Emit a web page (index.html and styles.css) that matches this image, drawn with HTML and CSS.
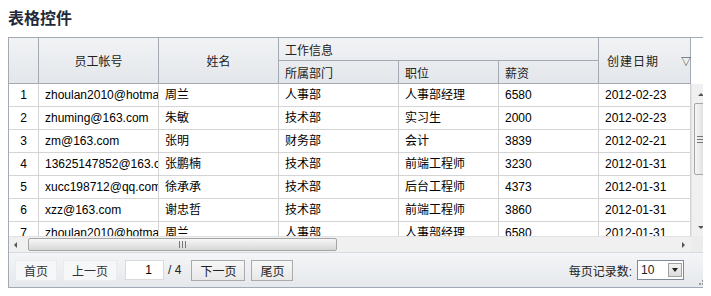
FILE: index.html
```html
<!DOCTYPE html>
<html lang="zh-CN">
<head>
    <meta charset="UTF-8">
    <title>表格控件</title>
    <link rel="stylesheet" href="styles.css">
</head>
<body>

    <h2 class="title">表格控件</h2>

    <div class="grid">
        <div class="grid-top">
            <div class="grid-main">
                <!-- 表头：两行，工作信息下分三列 -->
                <div class="grid-head">
                    <div class="hcell span2"></div>
                    <div class="hcell span2 center">员工帐号</div>
                    <div class="hcell span2 center">姓名</div>
                    <div class="hcell group">工作信息</div>
                    <div class="hcell span2 center sort">创建日期<span class="sort-arrow">▽</span></div>
                    <div class="hcell sub">所属部门</div>
                    <div class="hcell sub">职位</div>
                    <div class="hcell sub">薪资</div>
                </div>
                <div class="grid-view">
                    <div class="grid-body" id="gridBody"></div>
                </div>
            </div>
            <div class="vscroll">
                <div class="vscroll-head"></div>
                <div class="vscroll-track">
                    <span class="arrow up"></span>
                    <div class="vthumb"><span class="grip"></span></div>
                    <span class="arrow down"></span>
                </div>
            </div>
        </div>

        <div class="hscroll">
            <div class="hscroll-track">
                <span class="arrow left"></span>
                <div class="hthumb"><span class="grip"></span></div>
                <span class="arrow right"></span>
            </div>
            <div class="corner"></div>
        </div>

        <div class="pager">
            <button class="btn flat">首页</button>
            <button class="btn flat">上一页</button>
            <input type="text" class="page-input" value="1">
            <span class="page-total">/ 4</span>
            <button class="btn">下一页</button>
            <button class="btn">尾页</button>
            <div class="page-size">
                <span>每页记录数:</span>
                <div class="select">
                    <span class="select-value">10</span>
                    <span class="select-btn"></span>
                </div>
            </div>
            <div class="resize-grip"></div>
        </div>
    </div>

    <script>
        // 表格数据
        const rows = [
            ['zhoulan2010@hotmail.com', '周兰', '人事部', '人事部经理', '6580', '2012-02-23'],
            ['zhuming@163.com', '朱敏', '技术部', '实习生', '2000', '2012-02-23'],
            ['zm@163.com', '张明', '财务部', '会计', '3839', '2012-02-21'],
            ['13625147852@163.com', '张鹏楠', '技术部', '前端工程师', '3230', '2012-01-31'],
            ['xucc198712@qq.com', '徐承承', '技术部', '后台工程师', '4373', '2012-01-31'],
            ['xzz@163.com', '谢忠哲', '技术部', '前端工程师', '3860', '2012-01-31'],
            ['zhoulan2010@hotmail.com', '周兰', '人事部', '人事部经理', '6580', '2012-01-31']
        ];

        // 生成表格行
        function renderRows() {
            const body = document.getElementById('gridBody');
            rows.forEach((row, i) => {
                const num = document.createElement('div');
                num.className = 'cell num';
                num.textContent = i + 1;
                body.appendChild(num);
                row.forEach((value) => {
                    const cell = document.createElement('div');
                    cell.className = 'cell';
                    cell.textContent = value;
                    body.appendChild(cell);
                });
            });
        }

        renderRows();
    </script>

</body>
</html>
```

FILE: styles.css
```css
body {
    margin: 8px;
    font-family: 'Liberation Sans', 'Noto Sans CJK SC', sans-serif;
    font-size: 12px;
    color: #000;
    background: #fff;
    overflow: hidden;
}

.title {
    margin: 0 0 7px 0;
    font-size: 16px;
    line-height: 22px;
    font-weight: bold;
    color: #1f2a3a;
}

.grid {
    width: 702px;
    box-sizing: border-box;
    border: 1px solid #a3aab4;
}

.grid-top {
    display: flex;
}

.grid-main {
    width: 682px;
    flex-shrink: 0;
    overflow: hidden;
}

/* 列宽：序号、帐号、姓名、部门、职位、薪资、日期 */
.grid-head,
.grid-body {
    display: grid;
    grid-template-columns: 30px 120px 120px 120px 100px 100px 92px;
}

.grid-head {
    grid-template-rows: 23px 23px;
    background: linear-gradient(to bottom, #f1f3f5, #e3e6ea);
}

.hcell {
    box-sizing: border-box;
    border-right: 1px solid #a3aab4;
    border-bottom: 1px solid #a3aab4;
    padding: 0 6px;
    display: flex;
    align-items: center;
    color: #222;
    white-space: nowrap;
}

.hcell.span2 {
    grid-row: span 2;
}

.hcell.center {
    justify-content: center;
}

.hcell.group {
    grid-column: 4 / 7;
}

.hcell.sort {
    padding-left: 12px;
    padding-right: 2px;
    letter-spacing: 1px;
}

.sort-arrow {
    margin-left: 22px;
    font-size: 10px;
    color: #333;
}

.grid-view {
    height: 152px;
    overflow: hidden;
}

.grid-body {
    grid-auto-rows: 23px;
}

.cell {
    box-sizing: border-box;
    border-right: 1px solid #d4d4d4;
    border-bottom: 1px solid #d4d4d4;
    padding: 0 6px;
    line-height: 22px;
    white-space: nowrap;
    overflow: hidden;
}

.cell.num {
    text-align: center;
    padding: 0;
}

/* 竖直滚动条 */
.vscroll {
    width: 18px;
    flex-shrink: 0;
    display: flex;
    flex-direction: column;
}

.vscroll-head {
    height: 46px;
    background: #fff;
}

.vscroll-track {
    height: 152px;
    background: #f0f0f0;
    border-left: 1px solid #e2e2e2;
    display: flex;
    flex-direction: column;
    align-items: center;
    position: relative;
}

.vthumb {
    margin-top: 19px;
    width: 14px;
    height: 72px;
    box-sizing: border-box;
    border: 1px solid #a5a5a5;
    border-radius: 2px;
    background: linear-gradient(to right, #f6f6f6, #e4e4e4 60%, #d6d6d6);
    display: flex;
    align-items: center;
    justify-content: center;
}

.vthumb .grip {
    width: 7px;
    height: 5px;
    border-top: 1px solid #777;
    border-bottom: 1px solid #777;
    background: linear-gradient(#777, #777) center / 7px 1px no-repeat;
}

/* 滚动条箭头 */
.arrow {
    position: absolute;
    width: 0;
    height: 0;
    border: 3px solid transparent;
}

.arrow.up {
    top: 9px;
    left: 6px;
    border-bottom-color: #555;
    border-top-width: 0;
}

.arrow.down {
    bottom: 7px;
    left: 6px;
    border-top-color: #555;
    border-bottom-width: 0;
}

.arrow.left {
    left: 5px;
    top: 5px;
    border-right-color: #555;
    border-left-width: 0;
}

.arrow.right {
    right: 6px;
    top: 5px;
    border-left-color: #555;
    border-right-width: 0;
}

/* 水平滚动条 */
.hscroll {
    display: flex;
    height: 16px;
}

.hscroll-track {
    width: 682px;
    flex-shrink: 0;
    background: #f0f0f0;
    border-top: 1px solid #e2e2e2;
    box-sizing: border-box;
    position: relative;
}

.hthumb {
    margin-left: 19px;
    width: 309px;
    height: 13px;
    margin-top: 1px;
    box-sizing: border-box;
    border: 1px solid #a5a5a5;
    border-radius: 2px;
    background: linear-gradient(to bottom, #f6f6f6, #e4e4e4 60%, #d6d6d6);
    display: flex;
    align-items: center;
    justify-content: center;
}

.hthumb .grip {
    width: 5px;
    height: 7px;
    border-left: 1px solid #777;
    border-right: 1px solid #777;
    background: linear-gradient(#777, #777) center / 1px 7px no-repeat;
}

.corner {
    width: 18px;
    background: #ececec;
}

/* 分页栏 */
.pager {
    height: 35px;
    border-top: 1px solid #d8dce2;
    box-sizing: border-box;
    background: linear-gradient(to bottom, #f4f5f7, #e5e8ec);
    display: flex;
    align-items: center;
    padding: 0 6px;
    position: relative;
}

.btn {
    font-family: inherit;
    font-size: 12px;
    height: 21px;
    padding: 0 8px;
    margin-right: 6px;
    border: 1px solid #a9a9a9;
    background: linear-gradient(to bottom, #f7f7f7, #e8e8e8);
    color: #222;
    cursor: pointer;
}

.btn.flat {
    border-color: #e9ebee;
    background: #f6f7f8;
    color: #333;
}

.page-input {
    width: 39px;
    height: 20px;
    box-sizing: border-box;
    border: 1px solid #dadada;
    margin: 0 4px 0 2px;
    padding: 0 11px 0 0;
    text-align: right;
    font-family: inherit;
    font-size: 12px;
}

.page-total {
    margin-right: 10px;
    color: #222;
}

.page-size {
    margin-left: auto;
    margin-right: 19px;
    display: flex;
    align-items: center;
    color: #222;
}

.select {
    margin-left: 5px;
    width: 45px;
    height: 18px;
    border: 1px solid #7f8a96;
    background: #fff;
    display: flex;
    align-items: center;
}

.select-value {
    flex: 1;
    padding-left: 3px;
}

.select-btn {
    width: 14px;
    height: 14px;
    margin-right: 1px;
    box-sizing: border-box;
    border: 1px solid #a0a0a0;
    background: linear-gradient(to bottom, #f2f2f2, #dcdcdc);
    display: flex;
    align-items: center;
    justify-content: center;
}

.select-btn::after {
    content: '';
    border: 3px solid transparent;
    border-top: 4px solid #222;
    border-bottom-width: 0;
}

/* 右下角拖拽点 */
.resize-grip {
    position: absolute;
    right: 8px;
    bottom: 2px;
    width: 2px;
    height: 2px;
    background: #999;
    box-shadow:
        3px 0 #999, 6px 0 #999,
        3px -3px #999, 6px -3px #999,
        6px -6px #999;
}
```
